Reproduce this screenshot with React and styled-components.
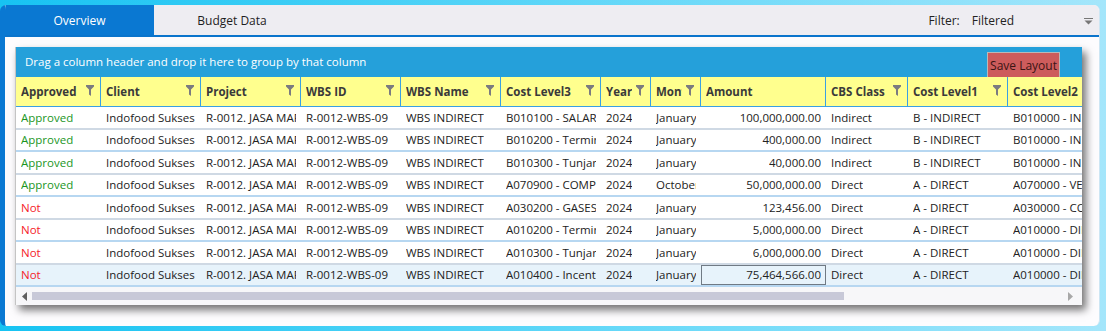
import React from 'react'
import styled, { createGlobalStyle } from 'styled-components'

const GlobalStyle = createGlobalStyle`
  html, body {
    margin: 0;
    padding: 0;
    width: 1106px;
    height: 331px;
    overflow: hidden;
    font-family: "Open Sans", "Noto Sans", sans-serif;
  }
`

const columns = [
  { key: 'approved', title: 'Approved', width: 85 },
  { key: 'client', title: 'Client', width: 100 },
  { key: 'project', title: 'Project', width: 100 },
  { key: 'wbsId', title: 'WBS ID', width: 100 },
  { key: 'wbsName', title: 'WBS Name', width: 100 },
  { key: 'cost3', title: 'Cost Level3', width: 100 },
  { key: 'year', title: 'Year', width: 50 },
  { key: 'month', title: 'Month', width: 50 },
  { key: 'amount', title: 'Amount', width: 125, right: true, noFilter: true },
  { key: 'cbs', title: 'CBS Class', width: 82 },
  { key: 'cost1', title: 'Cost Level1', width: 100 },
  { key: 'cost2', title: 'Cost Level2', width: 100, noFilter: true },
]

const base = {
  client: 'Indofood Sukses Makmur',
  project: 'R-0012. JASA MARGA TOLL',
  wbsId: 'R-0012-WBS-09',
  wbsName: 'WBS INDIRECT',
  year: '2024',
}

const rows = [
  { approved: true, cost3: 'B010100 - SALARY', month: 'January', amount: '100,000,000.00', cbs: 'Indirect', cost1: 'B - INDIRECT', cost2: 'B010000 - INDIRECT' },
  { approved: true, cost3: 'B010200 - Termination', month: 'January', amount: '400,000.00', cbs: 'Indirect', cost1: 'B - INDIRECT', cost2: 'B010000 - INDIRECT' },
  { approved: true, cost3: 'B010300 - Tunjangan', month: 'January', amount: '40,000.00', cbs: 'Indirect', cost1: 'B - INDIRECT', cost2: 'B010000 - INDIRECT' },
  { approved: true, cost3: 'A070900 - COMPUTER', month: 'October', amount: '50,000,000.00', cbs: 'Direct', cost1: 'A - DIRECT', cost2: 'A070000 - VEHICLE' },
  { approved: false, cost3: 'A030200 - GASES', month: 'January', amount: '123,456.00', cbs: 'Direct', cost1: 'A - DIRECT', cost2: 'A030000 - CONSUMABLE' },
  { approved: false, cost3: 'A010200 - Termination', month: 'January', amount: '5,000,000.00', cbs: 'Direct', cost1: 'A - DIRECT', cost2: 'A010000 - DIRECT LABOUR' },
  { approved: false, cost3: 'A010300 - Tunjangan', month: 'January', amount: '6,000,000.00', cbs: 'Direct', cost1: 'A - DIRECT', cost2: 'A010000 - DIRECT LABOUR' },
  { approved: false, cost3: 'A010400 - Incentive', month: 'January', amount: '75,464,566.00', cbs: 'Direct', cost1: 'A - DIRECT', cost2: 'A010000 - DIRECT LABOUR', selected: true },
]

function FunnelIcon() {
  return (
    <svg width="8" height="11" viewBox="0 0 8 11">
      <path d="M0 0 H8 V1.5 L5 4.5 V11 L3 9.5 V4.5 L0 1.5 Z" fill="#7b7b80" />
    </svg>
  )
}

export default function App() {
  return (
    <>
      <GlobalStyle />
      <Desktop>
        <Window>
          <TabBar>
            <Tab $active>Overview</Tab>
            <Tab>Budget Data</Tab>
            <FilterBox>
              <FilterLabel>Filter:</FilterLabel>
              <FilterValue>Filtered</FilterValue>
              <svg width="9" height="7" viewBox="0 0 9 7">
                <rect x="0" y="0" width="9" height="1" fill="#777" />
                <path d="M0.5 2.5 H8.5 L4.5 6.5 Z" fill="#777" />
              </svg>
            </FilterBox>
          </TabBar>
          <Content>
            <Grid>
              <GroupPanel>
                <GroupHint>Drag a column header and drop it here to group by that column</GroupHint>
                <SaveButton>Save Layout</SaveButton>
              </GroupPanel>
              <HeaderRow>
                {columns.map((c) => (
                  <HeaderCell key={c.key} $w={c.width}>
                    <HeaderText>{c.title}</HeaderText>
                    {!c.noFilter && <FunnelIcon />}
                  </HeaderCell>
                ))}
              </HeaderRow>
              <Body>
                {rows.map((r, i) => {
                  const row = { ...base, ...r }
                  return (
                    <Row key={i} $selected={r.selected}>
                      {columns.map((c) => {
                        if (c.key === 'approved') {
                          return (
                            <Cell key={c.key} $w={c.width} $color={r.approved ? '#1a961e' : '#f5222a'}>
                              <CellText>{r.approved ? 'Approved' : 'Not'}</CellText>
                            </Cell>
                          )
                        }
                        return (
                          <Cell
                            key={c.key}
                            $w={c.width}
                            $right={c.right}
                            $focused={r.selected && c.key === 'amount'}
                          >
                            <CellText>{row[c.key]}</CellText>
                          </Cell>
                        )
                      })}
                    </Row>
                  )
                })}
              </Body>
              <ScrollBar>
                <svg width="6" height="9" viewBox="0 0 6 9">
                  <path d="M5 0 V9 L0 4.5 Z" fill="#606060" />
                </svg>
                <Track>
                  <Thumb />
                </Track>
                <svg width="6" height="9" viewBox="0 0 6 9">
                  <path d="M1 0 V9 L6 4.5 Z" fill="#a8a8a8" />
                </svg>
              </ScrollBar>
            </Grid>
          </Content>
        </Window>
      </Desktop>
    </>
  )
}

const Desktop = styled.div`
  width: 1106px;
  height: 331px;
  box-sizing: border-box;
  padding: 5px 6px 5px 0;
  background: linear-gradient(90deg, #17c3f2 0%, #5dd6f8 50%, #a4e6fb 100%);
`

const Window = styled.div`
  height: 100%;
  box-sizing: border-box;
  background: #fdfcfe;
  border-left: 5px solid #0a78d2;
  border-right: 1px solid #cde6f4;
  border-radius: 6px;
  overflow: hidden;
  display: flex;
  flex-direction: column;
`

const TabBar = styled.div`
  height: 30px;
  flex: none;
  display: flex;
  align-items: stretch;
  background: #eeedf2;
  border-bottom: 2px solid #0a74cc;
  font-size: 12px;
`

const Tab = styled.div`
  width: ${(p) => (p.$active ? 149 : 156)}px;
  display: flex;
  align-items: center;
  justify-content: center;
  color: ${(p) => (p.$active ? '#ffffff' : '#1e1e1e')};
  background: ${(p) => (p.$active ? '#0a78d2' : 'transparent')};
`

const FilterBox = styled.div`
  margin-left: auto;
  display: flex;
  align-items: center;
  padding-right: 6px;
  color: #222;
  svg {
    margin-left: 70px;
    margin-top: 2px;
  }
`

const FilterLabel = styled.span`
  margin-right: 12px;
`

const FilterValue = styled.span``

const Content = styled.div`
  flex: 1;
  padding: 10px 18px 0 10px;
`

const Grid = styled.div`
  width: 1067px;
  height: 258px;
  display: flex;
  flex-direction: column;
  overflow: hidden;
  background: #fff;
  box-shadow: 4px 5px 8px rgba(0, 0, 0, 0.55);
  border-left: 1px solid #c4c4c4;
  box-sizing: border-box;
`

const GroupPanel = styled.div`
  height: 30px;
  flex: none;
  background: #25a0da;
  display: flex;
  align-items: flex-end;
  justify-content: space-between;
  padding-left: 9px;
`

const GroupHint = styled.span`
  color: #ffffff;
  font-size: 11.5px;
  line-height: 30px;
`

const SaveButton = styled.button`
  height: 25px;
  width: 73px;
  margin-right: 22px;
  padding: 0;
  background: #cd5c5c;
  border: 1px solid #b9b9b9;
  border-bottom: none;
  color: #3b1414;
  font-family: inherit;
  font-size: 12px;
`

const HeaderRow = styled.div`
  display: flex;
  height: 30px;
  flex: none;
  background: #ffff8e;
  border-bottom: 1px solid #3aa0e2;
  box-sizing: border-box;
`

const HeaderCell = styled.div`
  width: ${(p) => p.$w}px;
  flex: none;
  box-sizing: border-box;
  display: flex;
  align-items: center;
  gap: 4px;
  padding: 0 6px 0 5px;
  border-right: 1px solid #3aa0e2;
  svg {
    flex: none;
    margin-top: -2px;
  }
`

const HeaderText = styled.span`
  flex: 1;
  overflow: hidden;
  white-space: nowrap;
  font-size: 11.5px;
  font-weight: 700;
  color: #3a3a3a;
`

const Body = styled.div`
  flex: none;
`

const Row = styled.div`
  display: flex;
  height: 22.5px;
  box-sizing: border-box;
  background: ${(p) => (p.$selected ? '#e7f3fb' : '#ffffff')};
  border-bottom: 2px solid #cfd9e4;
  &:nth-child(even) {
    border-bottom-color: #b7d7f1;
  }
`

const Cell = styled.div`
  width: ${(p) => p.$w}px;
  flex: none;
  box-sizing: border-box;
  padding: 0 4px;
  display: flex;
  align-items: center;
  justify-content: ${(p) => (p.$right ? 'flex-end' : 'flex-start')};
  font-size: 11.5px;
  color: ${(p) => p.$color || '#222222'};
  border: 1px solid ${(p) => (p.$focused ? '#707a84' : 'transparent')};
`

const CellText = styled.span`
  white-space: nowrap;
  overflow: hidden;
`

const ScrollBar = styled.div`
  flex: 1;
  display: flex;
  align-items: center;
  gap: 4px;
  padding: 0 9px 0 6px;
  background: #f7f7f9;
`

const Track = styled.div`
  flex: 1;
  height: 8px;
`

const Thumb = styled.div`
  width: 812px;
  height: 8px;
  background: #c8c9d8;
`
